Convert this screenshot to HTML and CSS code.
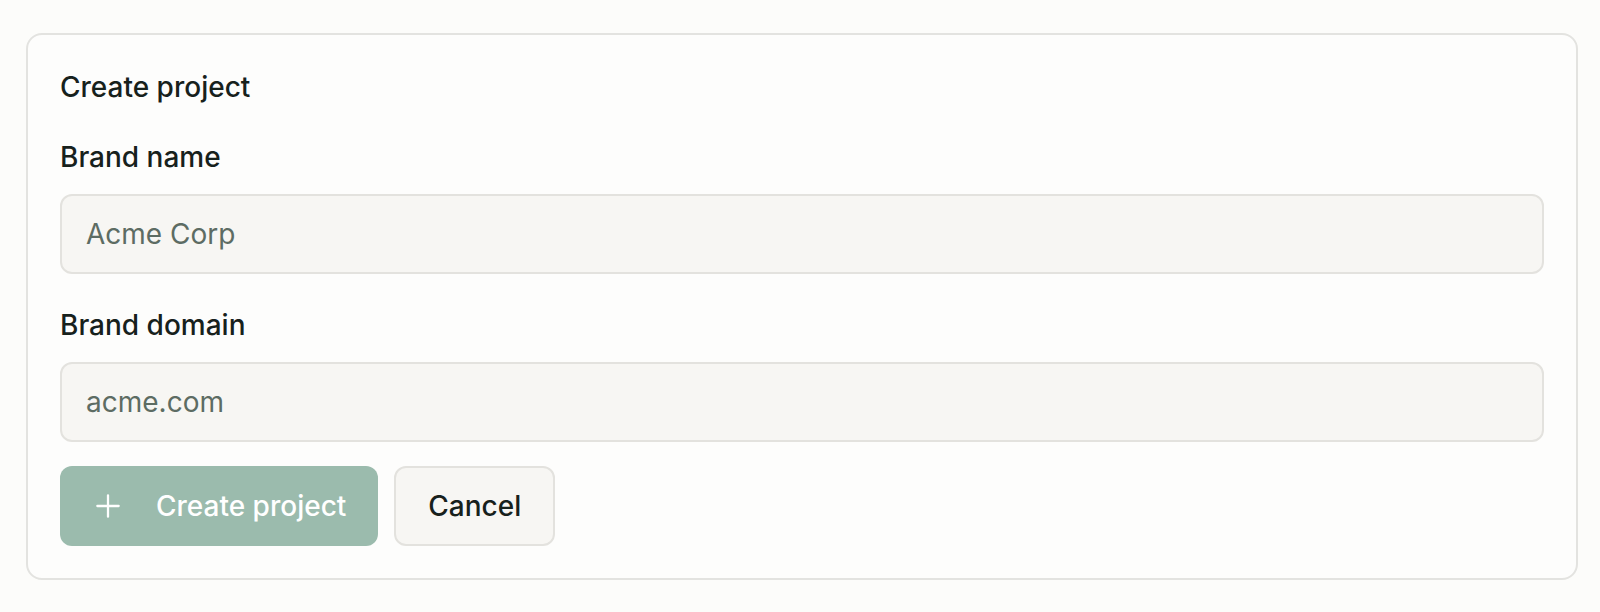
FILE: index.html
```html
<!DOCTYPE html>
<html lang="en">
<head>
  <meta charset="UTF-8" />
  <meta name="viewport" content="width=device-width, initial-scale=1.0"/>
  <title>Create project</title>
  <link rel="stylesheet" href="styles.css">
</head>
<body>

<!-- Create project card -->
<div class="card">
  <div class="card-title">Create project</div>

  <div class="field">
    <label class="field-label" for="brand-name">Brand name</label>
    <input class="field-input" id="brand-name" type="text" placeholder="Acme Corp">
  </div>

  <div class="field">
    <label class="field-label" for="brand-domain">Brand domain</label>
    <input class="field-input" id="brand-domain" type="text" placeholder="acme.com">
  </div>

  <div class="actions">
    <button class="btn btn-primary" type="button">
      <svg class="btn-icon" viewBox="0 0 24 24" width="32" height="32" fill="none" stroke="currentColor" stroke-width="1.7" stroke-linecap="round">
        <path d="M12 4v16M4 12h16"/>
      </svg>
      Create project
    </button>
    <button class="btn btn-secondary" type="button">Cancel</button>
  </div>
</div>

</body>
</html>
```

FILE: styles.css
```css
body {
  margin: 0;
  padding: 33px 22px 32px 26px;
  font-family: Inter, "Noto Sans", sans-serif;
  background: #fcfcfa;
  color: #17211c;
}

.card {
  border: 2px solid #e3e3e0;
  border-radius: 16px;
  background: #fdfdfc;
  padding: 32px;
}

.card-title {
  font-size: 28px;
  line-height: 40px;
  font-weight: 500;
}

.field {
  margin-top: 30px;
}

.field + .field {
  margin-top: 31px;
}

.field-label {
  display: block;
  font-size: 28px;
  line-height: 40px;
  font-weight: 500;
  margin-bottom: 17px;
}

.field-input {
  display: block;
  box-sizing: border-box;
  width: 100%;
  height: 80px;
  margin: 0;
  padding: 0 24px;
  font-family: Inter, "Noto Sans", sans-serif;
  font-size: 28px;
  color: #17211c;
  background: #f7f6f3;
  border: 2px solid #e3e2de;
  border-radius: 12px;
  outline: none;
}

.field-input::placeholder {
  color: #5d6c63;
}

.actions {
  display: flex;
  gap: 16px;
  margin-top: 24px;
}

.btn {
  display: flex;
  align-items: center;
  box-sizing: border-box;
  height: 80px;
  padding: 0 32px;
  font-family: Inter, "Noto Sans", sans-serif;
  font-size: 28px;
  font-weight: 500;
  border-radius: 12px;
  cursor: pointer;
}

.btn-primary {
  gap: 32px;
  background: #9bbbad;
  color: #fff;
  border: none;
}

.btn-icon {
  flex: none;
}

.btn-secondary {
  background: #f7f6f3;
  color: #17211c;
  border: 2px solid #e3e2de;
}
```
